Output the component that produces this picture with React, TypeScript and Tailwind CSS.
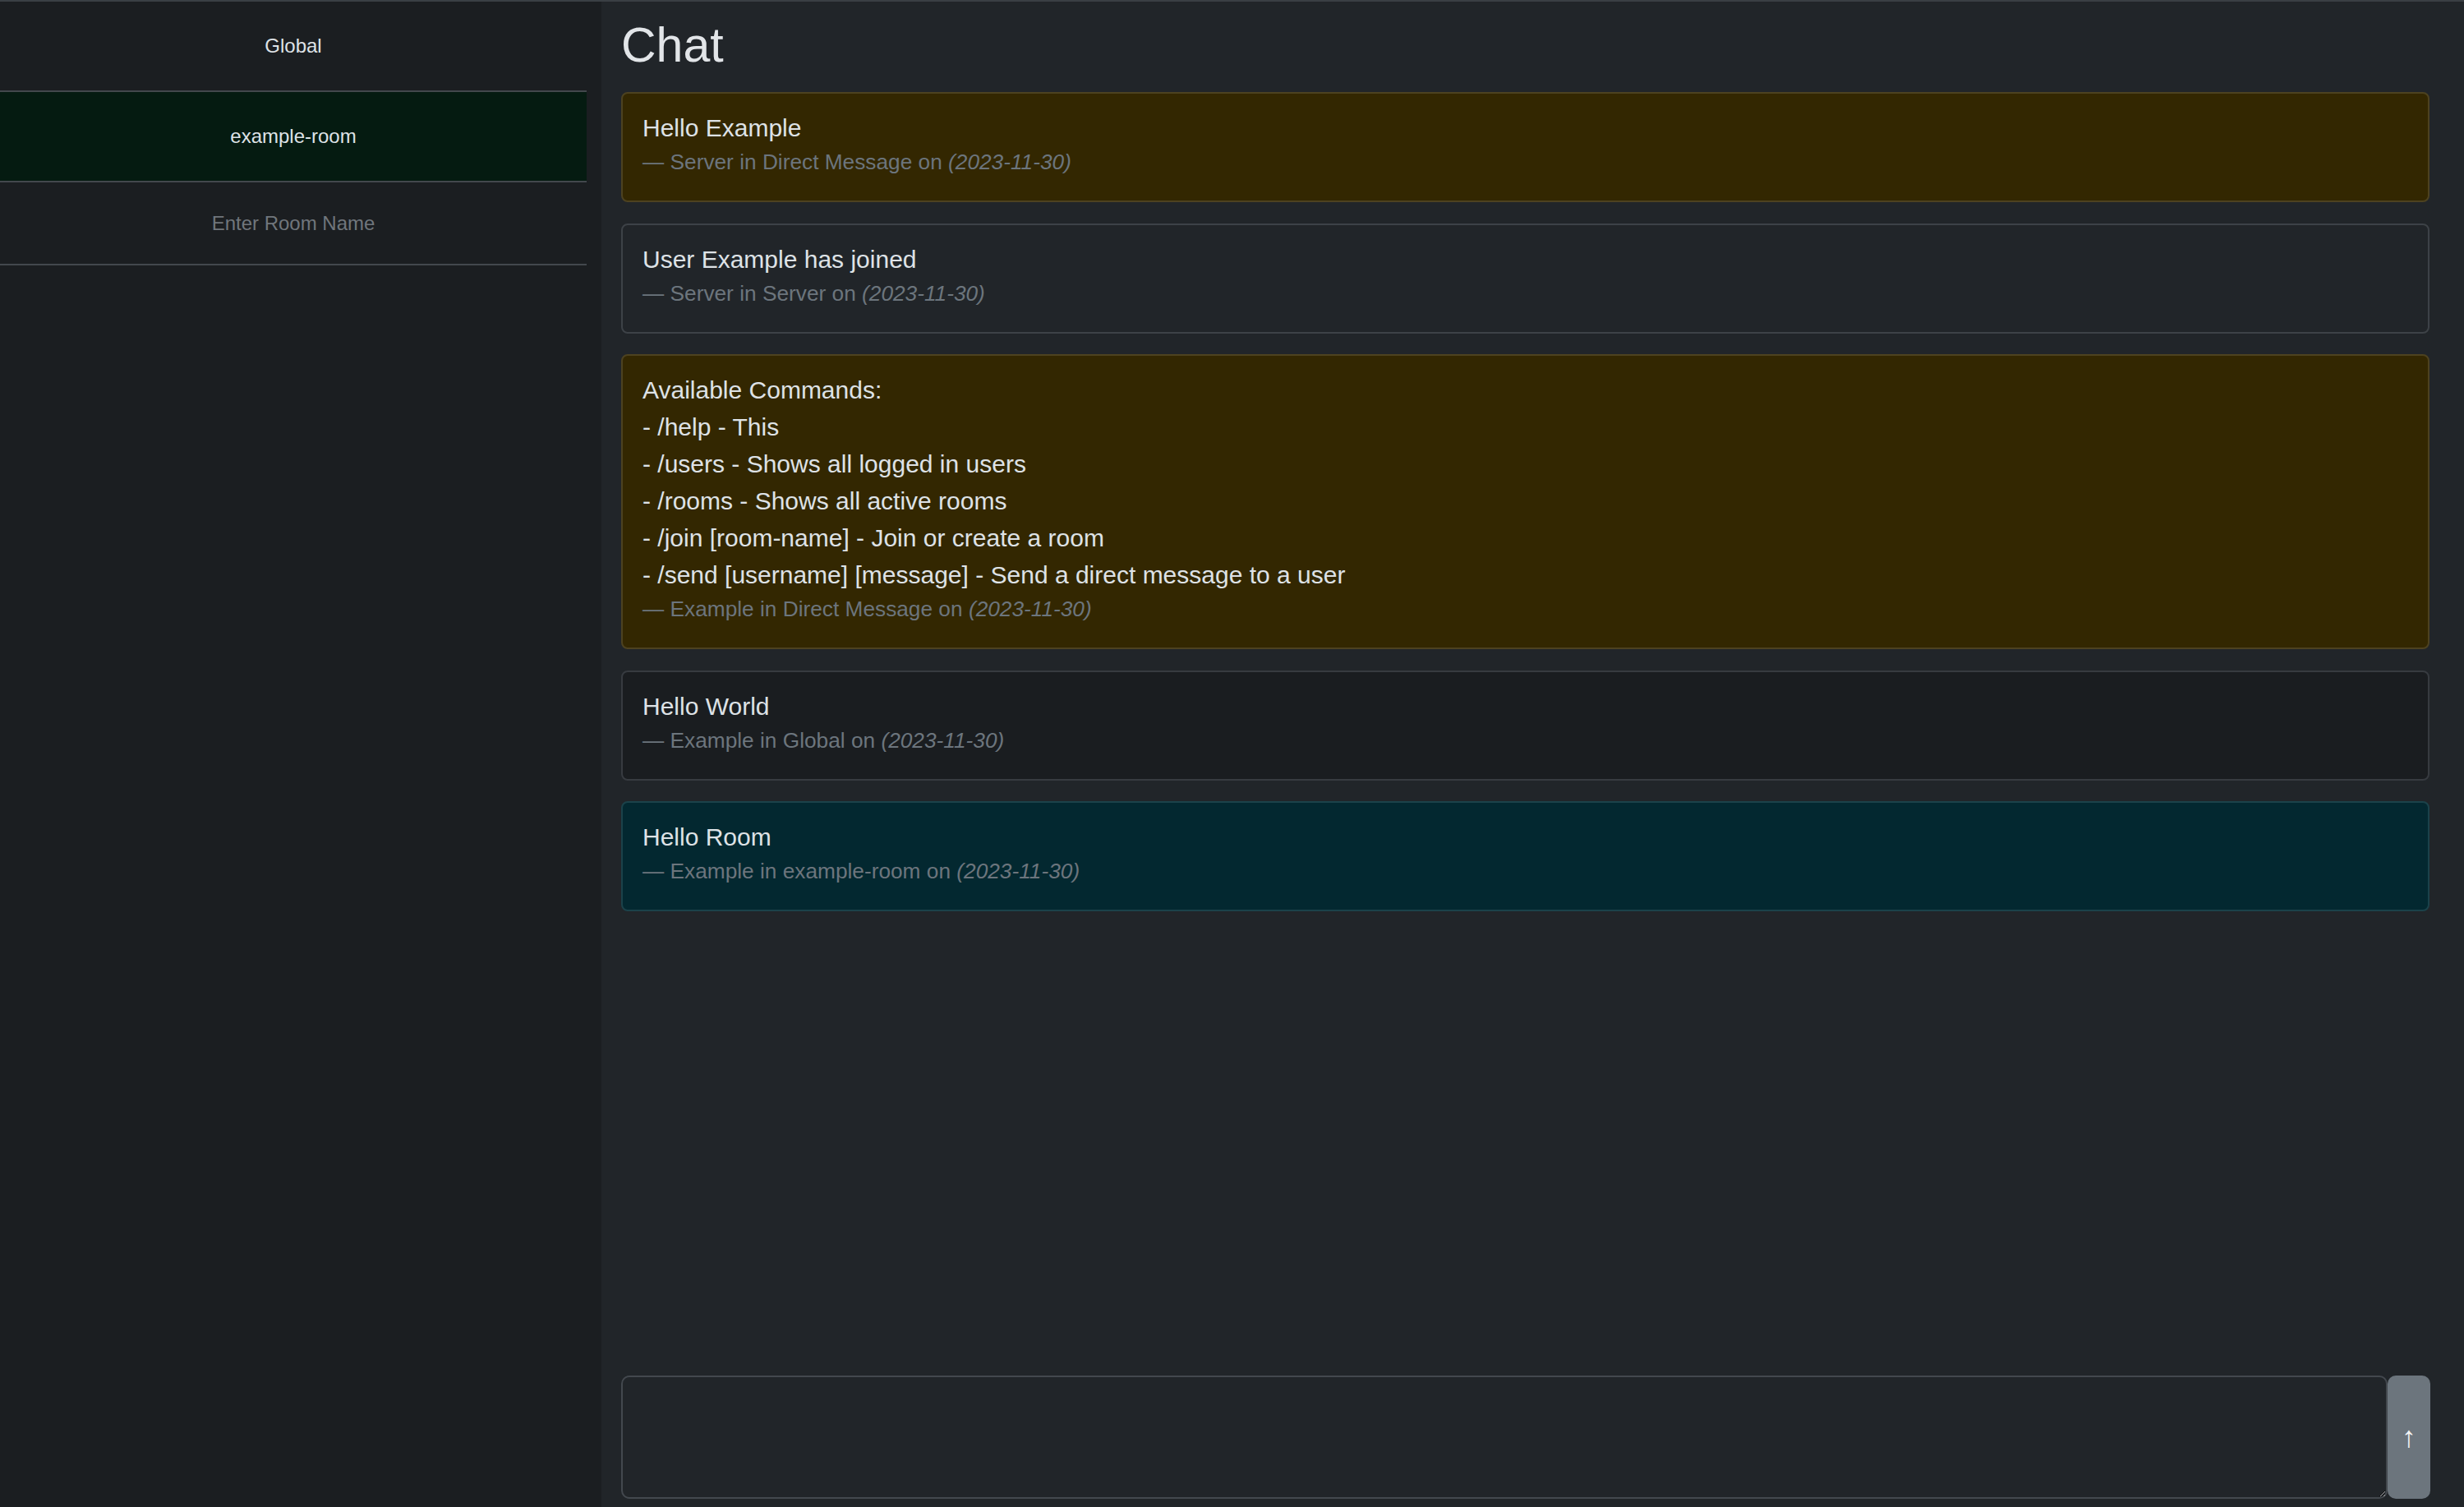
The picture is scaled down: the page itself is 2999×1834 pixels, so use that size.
import React from "react";

type Message = {
  lines: string[];
  author: string;
  where: string;
  date: string;
  tone: "warning" | "plain" | "dark" | "info";
};

const messages: Message[] = [
  { lines: ["Hello Example"], author: "Server", where: "Direct Message", date: "2023-11-30", tone: "warning" },
  { lines: ["User Example has joined"], author: "Server", where: "Server", date: "2023-11-30", tone: "plain" },
  {
    lines: [
      "Available Commands:",
      "- /help - This",
      "- /users - Shows all logged in users",
      "- /rooms - Shows all active rooms",
      "- /join [room-name] - Join or create a room",
      "- /send [username] [message] - Send a direct message to a user",
    ],
    author: "Example",
    where: "Direct Message",
    date: "2023-11-30",
    tone: "warning",
  },
  { lines: ["Hello World"], author: "Example", where: "Global", date: "2023-11-30", tone: "dark" },
  { lines: ["Hello Room"], author: "Example", where: "example-room", date: "2023-11-30", tone: "info" },
];

const toneClass = {
  warning: "bg-[#332701] border-[#4d4220]",
  plain: "bg-[#212529] border-[#3d4247]",
  dark: "bg-[#1a1d20] border-[#373b40]",
  info: "bg-[#032830] border-[#1b424a]",
};

const MessageCard = ({ msg }: { msg: Message }) => (
  <div className={`border-2 rounded-[8px] px-[24px] pt-[19px] pb-[27px] ${toneClass[msg.tone]}`}>
    {msg.lines.map((line, i) => (
      <p key={i} className="text-[30px] leading-[45px] text-[#dee2e6]">
        {line}
      </p>
    ))}
    <p className="text-[26.25px] leading-[39px] text-[#6c757d]">
      {"\u2014\u00a0"}
      {msg.author} in {msg.where} on <i>({msg.date})</i>
    </p>
  </div>
);

const RoomRow = ({ name, active }: { name: string; active?: boolean }) => (
  <div
    className={`h-[110px] border-b-2 border-[#43484d] flex items-center justify-center text-[24px] text-[#dee2e6] ${
      active ? "bg-[#051b11]" : ""
    }`}
  >
    {name}
  </div>
);

export default function App() {
  return (
    <div
      className="h-screen w-full flex border-t-2 border-[#3a3f44] bg-[#212529] overflow-hidden"
      style={{ fontFamily: '"Liberation Sans", Arial, sans-serif' }}
    >
      <aside className="w-[732px] shrink-0 bg-[#1b1e21]">
        <div className="w-[714px]">
          <RoomRow name="Global" />
          <RoomRow name="example-room" active />
          <div className="h-[101px] border-b-2 border-[#43484d] flex items-center">
            <input
              placeholder="Enter Room Name"
              className="w-full bg-transparent text-center text-[24px] text-[#dee2e6] placeholder:text-[#70767c] outline-none"
            />
          </div>
        </div>
      </aside>

      <main className="flex-1 flex flex-col pl-[24px] pr-[41px] pb-[10px] min-w-0">
        <h1 className="pt-[18px] mb-[22px] text-[59px] leading-[70px] text-[#e2e5e8]">Chat</h1>
        <div className="flex-1 flex flex-col gap-[25.5px] pr-px">
          {messages.map((m, i) => (
            <MessageCard key={i} msg={m} />
          ))}
        </div>
        <div className="flex h-[150px]">
          <textarea className="flex-1 h-full bg-[#212529] border-2 border-[#43484e] rounded-[10px] text-[30px] text-[#dee2e6] p-3 outline-none" />
          <button className="w-[52px] h-full bg-[#6c757d] rounded-[10px] text-[#f3f4f5] text-[36px] flex items-center justify-center">
            ↑
          </button>
        </div>
      </main>
    </div>
  );
}
